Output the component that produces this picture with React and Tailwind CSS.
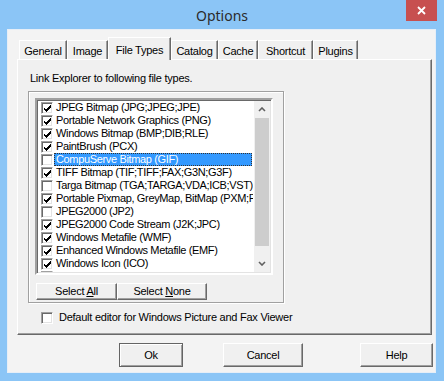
import React from 'react';

const files = [
  { name: 'JPEG Bitmap (JPG;JPEG;JPE)', on: true },
  { name: 'Portable Network Graphics (PNG)', on: true },
  { name: 'Windows Bitmap (BMP;DIB;RLE)', on: true },
  { name: 'PaintBrush (PCX)', on: true },
  { name: 'CompuServe Bitmap (GIF)', on: false, sel: true },
  { name: 'TIFF Bitmap (TIF;TIFF;FAX;G3N;G3F)', on: true },
  { name: 'Targa Bitmap (TGA;TARGA;VDA;ICB;VST)', on: false },
  { name: 'Portable Pixmap, GreyMap, BitMap (PXM;PGM;PBM)', on: true },
  { name: 'JPEG2000 (JP2)', on: false },
  { name: 'JPEG2000 Code Stream (J2K;JPC)', on: true },
  { name: 'Windows Metafile (WMF)', on: true },
  { name: 'Enhanced Windows Metafile (EMF)', on: true },
  { name: 'Windows Icon (ICO)', on: true },
  { name: 'Windows Cursor (CUR)', on: true },
];

const tabs = [
  { label: 'General', w: 'w-[48px]' },
  { label: 'Image', w: 'w-[41px]' },
  { label: 'File Types', w: 'w-[63px]', active: true },
  { label: 'Catalog', w: 'w-[47px]' },
  { label: 'Cache', w: 'w-[40px]' },
  { label: 'Shortcut', w: 'w-[55px]' },
  { label: 'Plugins', w: 'w-[45px]' },
];

// small classic checkbox
const CheckBox = ({ on }) => (
  <span className="w-[12px] h-[12px] shrink-0 bg-white border border-t-[#a0a0a0] border-l-[#a0a0a0] border-r-white border-b-white shadow-[inset_1px_1px_0_#696969,inset_-1px_-1px_0_#e3e3e3] flex items-center justify-center">
    {on && (
      <svg width="10" height="10" viewBox="0 0 10 10" shapeRendering="crispEdges">
        <polygon points="1.5,4 1.5,6.5 4,9 8.5,4.5 8.5,2 4,6.5" fill="#000" />
      </svg>
    )}
  </span>
);

const Chevron = ({ down }) => (
  <svg width="8" height="5" viewBox="0 0 8 5">
    <polyline
      points={down ? '1,1 4,4 7,1' : '1,4 4,1 7,4'}
      fill="none"
      stroke="#606060"
      strokeWidth="1.6"
    />
  </svg>
);

const Button = ({ children, className = '', isDefault }) => (
  <button
    className={`bg-[#f0f0f0] flex items-center justify-center text-[11px] tracking-[-0.25px] text-black border ${
      isDefault
        ? 'border-[#646464] shadow-[inset_1px_1px_0_#fff,inset_-1px_-1px_0_#a0a0a0]'
        : 'border-t-white border-l-white border-r-[#696969] border-b-[#696969] shadow-[inset_-1px_-1px_0_#a0a0a0]'
    } ${className}`}
  >
    {children}
  </button>
);

export default function App() {
  return (
    <div className="w-[444px] h-[381px] bg-[#8bc5f6] flex flex-col font-['Liberation_Sans',Arial,sans-serif] overflow-hidden">
      {/* Title bar */}
      <div className="relative h-[29px] flex items-center justify-center">
        <span className="font-['Noto_Sans',sans-serif] text-[14px] text-[#2b2b2b] mt-[1px]">Options</span>
        <div className="absolute top-0 right-[7px] w-[31px] h-[21px] bg-[#c75050] flex items-center justify-center">
          <svg width="9" height="9" viewBox="0 0 9 9">
            <path d="M1 1 L8 8 M8 1 L1 8" stroke="#fff" strokeWidth="1.8" />
          </svg>
        </div>
      </div>

      {/* Client area */}
      <div className="ml-[7px] w-[429px] h-[344px] bg-[#f3f3f3] border border-[#e6eef7] flex flex-col">
        {/* Tabs */}
        <div className="flex items-end h-[22px] mt-[7px] ml-[11px]">
          {tabs.map((t) =>
            t.active ? (
              <div
                key={t.label}
                className={`${t.w} h-[23px] -mb-[1px] relative z-10 bg-[#f0f0f0] border-l border-t border-l-white border-t-white border-r border-r-[#696969] shadow-[inset_-1px_0_0_#a0a0a0] flex items-start justify-center pt-[4px] text-[11px] tracking-[-0.25px] text-black`}
              >
                {t.label}
              </div>
            ) : (
              <div
                key={t.label}
                className={`${t.w} h-[19px] bg-[#f0f0f0] border-l border-t border-l-white border-t-white border-r border-r-[#696969] shadow-[inset_-1px_0_0_#a0a0a0] flex items-center justify-center pt-[2px] text-[11px] tracking-[-0.25px] text-black`}
              >
                {t.label}
              </div>
            )
          )}
        </div>

        {/* Panel */}
        <div className="ml-[9px] w-[415px] h-[276px] bg-[#f0f0f0] border-l border-t border-l-white border-t-white border-r border-b border-r-[#696969] border-b-[#696969] shadow-[inset_-1px_-1px_0_#a0a0a0] flex flex-col text-[11px] tracking-[-0.25px] text-black">
          <div className="h-[13px] leading-[13px] mt-[12px] ml-[12px]">Link Explorer to following file types.</div>

          {/* Group box */}
          <div className="mt-[6px] ml-[10px] w-[256px] h-[212px] border border-[#a0a0a0] shadow-[inset_1px_1px_0_#fff,1px_1px_0_#fff] flex flex-col">
            {/* List box */}
            <div className="mt-[6px] ml-[6px] w-[238px] h-[177px] bg-white border-2 border-t-[#a0a0a0] border-l-[#a0a0a0] border-r-white border-b-white shadow-[inset_1px_1px_0_#696969,inset_-1px_-1px_0_#e3e3e3] flex p-[1px] overflow-hidden">
              <div className="flex-1 flex flex-col overflow-hidden tracking-[-0.35px]">
                {files.map((f) => (
                  <div key={f.name} className="h-[13px] shrink-0 flex items-center">
                    <span className="w-[16px] shrink-0 flex justify-end pr-[1px]">
                      <CheckBox on={f.on} />
                    </span>
                    <span
                      className={`ml-[0px] h-[13px] leading-[13px] pl-[2px] pr-[2px] whitespace-nowrap overflow-hidden ${
                        f.sel
                          ? 'flex-1 bg-[#3399ff] text-white outline outline-1 outline-dotted outline-[#333] -outline-offset-1 mr-[1px]'
                          : ''
                      }`}
                    >
                      {f.name}
                    </span>
                  </div>
                ))}
              </div>
              {/* Scrollbar */}
              <div className="w-[17px] shrink-0 bg-[#f0f0f0] border-l border-l-white flex flex-col">
                <div className="h-[17px] flex items-center justify-center">
                  <Chevron />
                </div>
                <div className="h-[128px] bg-[#cdcdcd] mx-[1px]" />
                <div className="flex-1" />
                <div className="h-[17px] flex items-center justify-center">
                  <Chevron down />
                </div>
              </div>
            </div>

            {/* Select buttons */}
            <div className="flex mt-[8px] ml-[7px]">
              <Button className="w-[81px] h-[17px]">
                <span>
                  Select <span className="underline">A</span>ll
                </span>
              </Button>
              <Button className="w-[90px] h-[17px]">
                <span>
                  Select <span className="underline">N</span>one
                </span>
              </Button>
            </div>
          </div>

          {/* Default editor */}
          <div className="flex items-center mt-[8px] ml-[23px] h-[13px]">
            <CheckBox on={false} />
            <span className="ml-[6px]">Default editor for Windows Picture and Fax Viewer</span>
          </div>
        </div>

        {/* Dialog buttons */}
        <div className="flex mt-[8px] h-[24px]">
          <Button isDefault className="ml-[111px] w-[64px] h-[24px]">Ok</Button>
          <Button className="ml-[40px] w-[80px] h-[24px]">Cancel</Button>
          <Button className="ml-[57px] w-[73px] h-[24px]">Help</Button>
        </div>
      </div>
    </div>
  );
}
